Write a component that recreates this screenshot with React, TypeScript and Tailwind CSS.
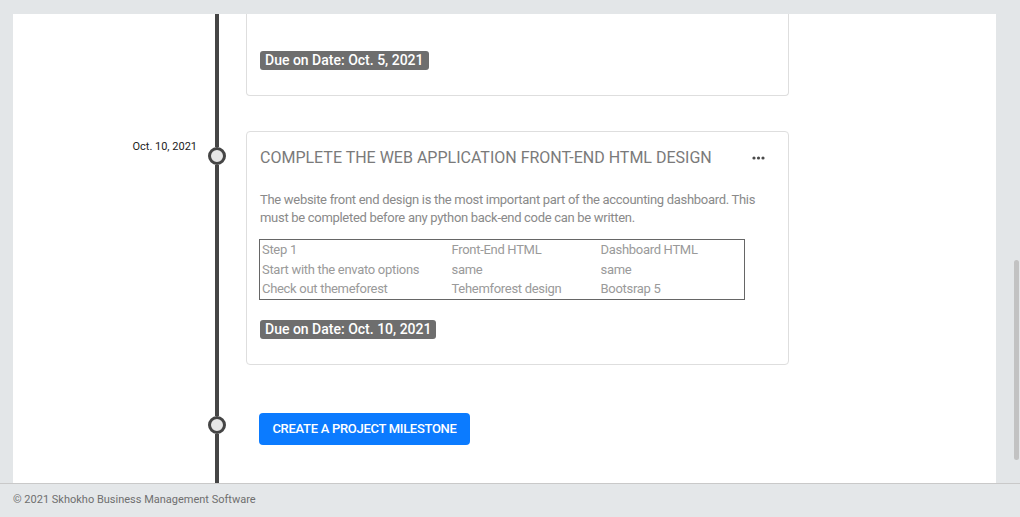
import React from "react";

/* ---------- timeline bits ---------- */
function Node() {
  return <div className="w-[18px] h-[18px] min-h-[18px] rounded-full border-[3px] border-[#454545] bg-[#e6e6e6]" />;
}

function Rail({ top, node = true }: { top?: number; node?: boolean }) {
  return (
    <div className="w-10 flex flex-col items-center self-stretch">
      {node ? (
        <>
          <div className="w-1 bg-[#454545]" style={{ height: top }} />
          <Node />
        </>
      ) : null}
      <div className="w-1 flex-1 bg-[#454545]" />
    </div>
  );
}

function DueBadge({ date }: { date: string }) {
  return (
    <div className="w-fit rounded-[3px] bg-[#6e6e6e] px-[5px] leading-[19px] text-[14px] font-medium text-white">
      Due on Date: {date}
    </div>
  );
}

function MoreDots() {
  return (
    <svg width="13" height="4" viewBox="0 0 13 4" fill="#4a4a4a">
      <circle cx="2" cy="2" r="1.6" />
      <circle cx="6.5" cy="2" r="1.6" />
      <circle cx="11" cy="2" r="1.6" />
    </svg>
  );
}

const rows = [
  ["Step 1", "Front-End HTML", "Dashboard HTML"],
  ["Start with the envato options", "same", "same"],
  ["Check out themeforest", "Tehemforest design", "Bootsrap 5"],
];

export default function App() {
  return (
    <div
      className="h-[517px] w-[1020px] flex flex-col bg-[#e3e6e8] overflow-hidden"
      style={{ fontFamily: "Roboto, 'Noto Sans', sans-serif" }}
    >
      <div className="flex-1 flex min-h-0 pt-[14px] pl-[13px]">
        {/* Main panel */}
        <div className="w-[983px] bg-white flex flex-col overflow-hidden">
          {/* Row: previous milestone (scrolled, top cut off) */}
          <div className="flex">
            <div className="w-[184px]" />
            <Rail node={false} />
            <div className="ml-[9px] pb-[35px]">
              <div className="w-[543px] border border-t-0 border-[#dedede] rounded-b-[4px] px-[13px] pt-[37px] pb-[25px]">
                <DueBadge date="Oct. 5, 2021" />
              </div>
            </div>
          </div>

          {/* Row: current milestone */}
          <div className="flex">
            <div className="w-[184px] pt-[8px] text-right text-[11px] leading-4 text-[#222]">Oct. 10, 2021</div>
            <Rail top={16} />
            <div className="ml-[9px] pb-[48px]">
              <div className="w-[543px] border border-[#dedede] rounded-[4px] pl-[13px] pr-[23px] pt-[14px] pb-[25px]">
                <div className="flex items-center justify-between">
                  <div className="text-[16px] leading-6 uppercase text-[#7a7a7a]">
                    Complete the web application front-end HTML design
                  </div>
                  <MoreDots />
                </div>
                <p className="mt-[21px] text-[13px] leading-[18px] tracking-[-0.3px] text-[#8a8a8a]">
                  The website front end design is the most important part of the accounting dashboard. This must be
                  completed before any python back-end code can be written.
                </p>
                <table className="mt-[12px] -ml-px w-[486px] border border-[#666] text-[13px] leading-[19.6px] tracking-[-0.3px] text-[#9a9a9a]">
                  <tbody>
                    {rows.map((r) => (
                      <tr key={r[0]}>
                        <td className="w-[192px] pl-[2px]">{r[0]}</td>
                        <td className="w-[149px]">{r[1]}</td>
                        <td>{r[2]}</td>
                      </tr>
                    ))}
                  </tbody>
                </table>
                <div className="mt-[20px]">
                  <DueBadge date="Oct. 10, 2021" />
                </div>
              </div>
            </div>
          </div>

          {/* Row: add milestone */}
          <div className="flex flex-1">
            <div className="w-[184px]" />
            <Rail top={3} />
            <div className="ml-[22px]">
              <button className="w-[211px] h-[32px] rounded-[4px] bg-[#0b7bff] text-[13px] font-medium uppercase tracking-[-0.3px] text-white">
                Create a project milestone
              </button>
            </div>
          </div>
        </div>

        {/* Scrollbar gutter */}
        <div className="flex-1 flex justify-end pr-[1px] pt-[246px]">
          <div className="w-[5px] h-[200px] rounded-full bg-[#c2c2c2]" />
        </div>
      </div>

      <footer className="h-[34px] border-t border-[#c9c9c9] bg-[#e4e7e9] flex items-center px-[13px] text-[11px] text-[#6f6f6f]">
        © 2021 Skhokho Business Management Software
      </footer>
    </div>
  );
}
